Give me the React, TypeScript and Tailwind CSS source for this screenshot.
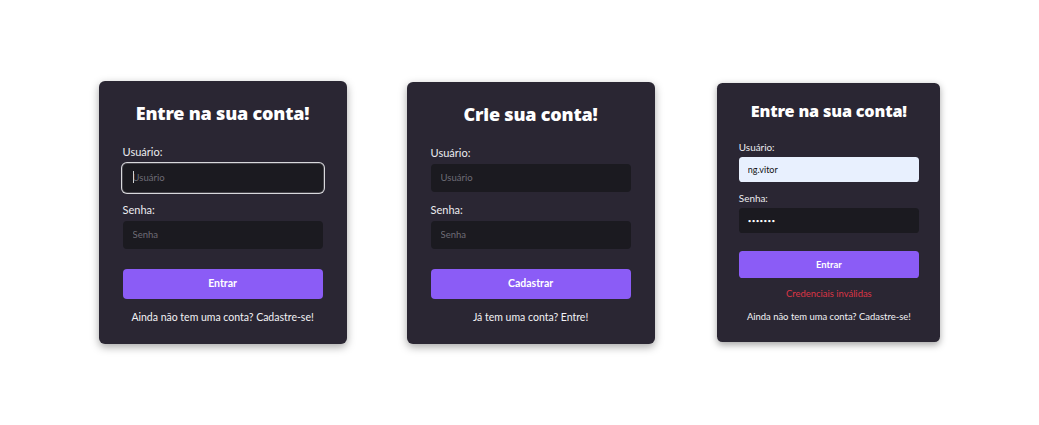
import React from "react";

type CardProps = {
  title: string;
  button: string;
  footer: string;
  variant: "focus" | "plain" | "filled";
  error?: string;
  small?: boolean;
};

function Card({ title, button, footer, variant, error, small }: CardProps) {
  return (
    <div
      className={
        "flex w-[248px] flex-col rounded-md bg-[#2a2633] px-6 pt-5 shadow-[0_3px_8px_rgba(0,0,0,0.35)] " +
        (small ? "ml-[3px] pb-[19px] [zoom:0.9]" : "pb-[18px]")
      }
    >
      <h1 className="text-center font-['Noto_Sans',sans-serif] text-[18px] leading-6 font-black tracking-[-0.2px] whitespace-nowrap text-white">
        {title}
      </h1>
      <label className="mt-[18px] text-[11px] leading-[18px] text-[#ececf0]">Usuário:</label>
      {variant === "focus" ? (
        <div className="relative mt-[2px]">
          <input
            readOnly
            placeholder="Usuário"
            className="h-7 w-full rounded bg-[#1b1a20] px-2.5 text-[9.5px] text-white outline-none ring-1 ring-[#d8d8dc] ring-offset-1 ring-offset-[#47454c] placeholder:text-[#6e6c76]"
          />
          <span className="absolute top-[8px] left-[10px] h-[12px] w-px bg-[#d0d0d0]" />
        </div>
      ) : variant === "filled" ? (
        <input
          readOnly
          value="ng.vitor"
          className="mt-[2px] h-7 w-full rounded bg-[#e8f0fe] px-2.5 text-[10px] text-[#111] outline-none"
        />
      ) : (
        <input
          readOnly
          placeholder="Usuário"
          className="mt-[2px] h-7 w-full rounded bg-[#1b1a20] px-2.5 text-[9.5px] text-white outline-none placeholder:text-[#6e6c76]"
        />
      )}
      <label className="mt-[9px] text-[11px] leading-[18px] text-[#ececf0]">Senha:</label>
      {variant === "filled" ? (
        <input
          readOnly
          type="password"
          value="1234567"
          className="mt-[2px] h-7 w-full rounded bg-[#1b1a20] px-2.5 text-[7px] tracking-[0.3px] text-white outline-none"
        />
      ) : (
        <input
          readOnly
          type="password"
          placeholder="Senha"
          className="mt-[2px] h-7 w-full rounded bg-[#1b1a20] px-2.5 text-[9.5px] text-white outline-none placeholder:text-[#6e6c76]"
        />
      )}
      <button className="mt-5 h-[30px] w-full rounded bg-[#8b5cf6] text-[10.5px] font-bold text-white">
        {button}
      </button>
      {error && (
        <p className="mt-[9px] text-center text-[10.5px] leading-[18px] whitespace-nowrap text-[#dc3545]">
          {error}
        </p>
      )}
      <p
        className={
          "text-center text-[10.5px] leading-[18px] whitespace-nowrap text-[#f2f2f5] " +
          (error ? "mt-[7px]" : "mt-[9px]")
        }
      >
        {footer}
      </p>
    </div>
  );
}

export default function App() {
  return (
    <div className="flex h-[425px] w-full items-center justify-center gap-[60px] bg-white font-['Lato',sans-serif]">
      <Card
        title="Entre na sua conta!"
        button="Entrar"
        footer="Ainda não tem uma conta? Cadastre-se!"
        variant="focus"
      />
      <Card title="Crie sua conta!" button="Cadastrar" footer="Já tem uma conta? Entre!" variant="plain" />
      <Card
        title="Entre na sua conta!"
        button="Entrar"
        footer="Ainda não tem uma conta? Cadastre-se!"
        variant="filled"
        error="Credenciais inválidas"
        small
      />
    </div>
  );
}
